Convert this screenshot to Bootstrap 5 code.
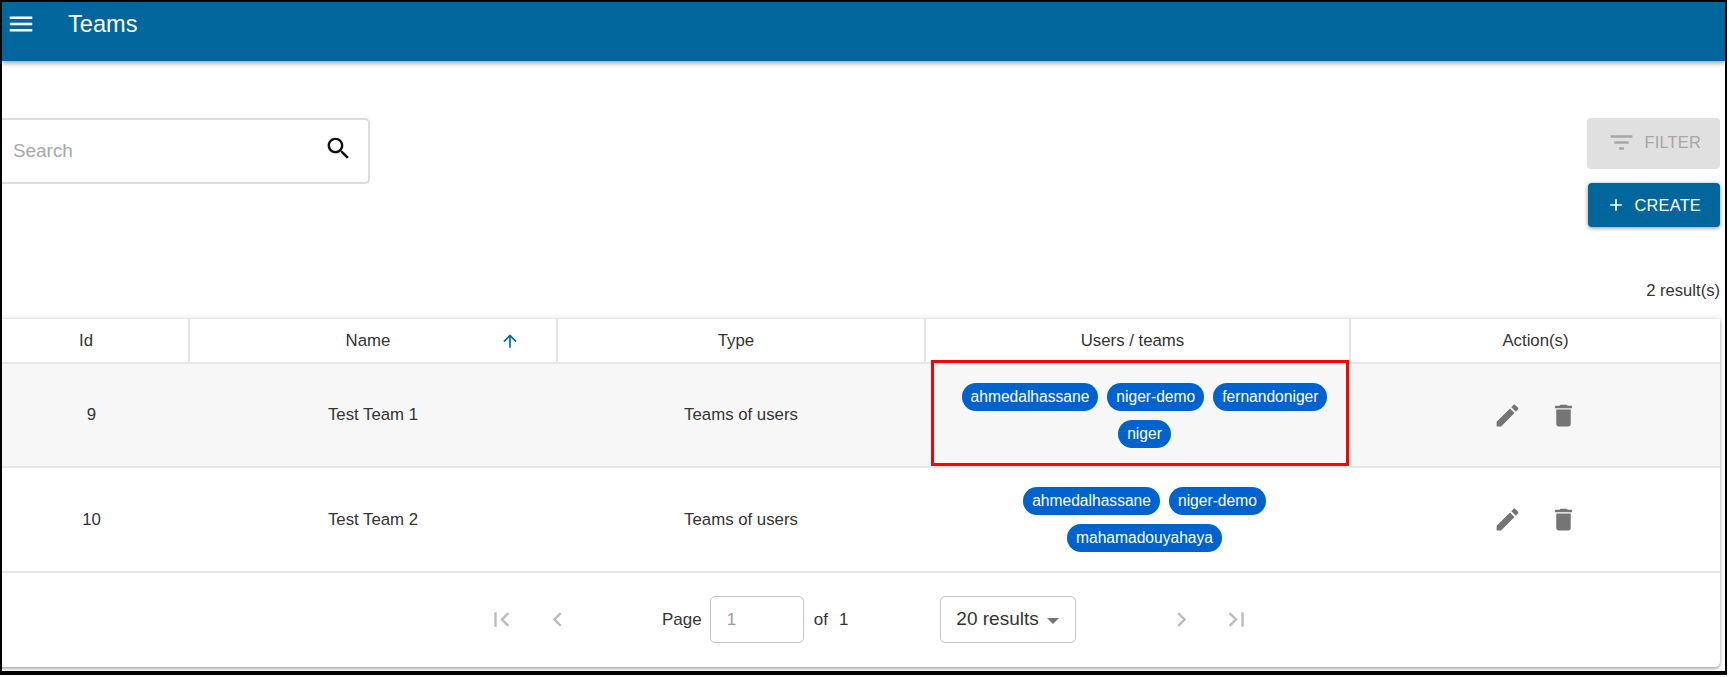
<!DOCTYPE html>
<html lang="en">
  <head>
    <meta charset="UTF-8" />
    <title>Teams</title>
    <link href="https://cdn.jsdelivr.net/npm/bootstrap@5.3.3/dist/css/bootstrap.min.css" rel="stylesheet" />
    <style>
      html, body { height: 100%; overflow: hidden; background: #fff; }
      body { font-family: "Liberation Sans", Arial, sans-serif; color: #333; font-size: 16.8px; }
      .screen-frame { position: relative; width: 1727px; height: 675px; border: 2px solid #000; border-bottom-width: 4px; overflow: hidden; }

      .app-bar { height: 59px; background: #00669b; box-shadow: 0 2px 5px rgba(0,0,0,.4); color: #fff; }
      .app-bar svg { width: 30px; height: 30px; fill: #fff; margin: 7px 0 0 4px; }
      .app-title { font-size: 23.6px; margin: 9px 0 0 32px; line-height: 26px; }

      .page-body { padding: 57px 5px 0 0; }
      .search-box { width: 380px; height: 66px; margin-left: -12px; padding: 0 15px 0 21px; border: 2px solid #dcdcdc; border-radius: 5px; }
      .search-box span { color: #a8a8a8; font-size: 18.9px; }
      .search-box svg { width: 29px; height: 29px; fill: #111; margin-top: -5px; }

      .tool-btn { display: flex; align-items: center; justify-content: flex-end; width: 132px; border: 0; border-radius: 4px; padding: 0 19px 0 0; font-size: 16.4px; letter-spacing: .2px; }
      .tool-filter { height: 51px; width: 133px; background: #e0e0e0; color: #a6a6a6; margin-bottom: 14px; padding-bottom: 3px; }
      .tool-filter svg { width: 29px; height: 29px; fill: #a6a6a6; margin-right: 9px; }
      .tool-create { height: 44px; background: #00669b; color: #fff; box-shadow: 0 1px 4px rgba(0,0,0,.45); }
      .tool-create svg { width: 20px; height: 20px; fill: #fff; margin-right: 9px; }
      .result-count { font-size: 16.6px; line-height: 20px; margin: 54px 0 18px; text-align: right; }

      .data-panel { margin-left: -8px; border-radius: 0 0 5px 5px; box-shadow: 0 0 5px rgba(0,0,0,.2), 0 2px 3px rgba(0,0,0,.25); background: #fff; }
      .team-table { table-layout: fixed; width: 1726px; margin: 0; --bs-table-color: #333; }
      .team-table th, .team-table td { text-align: center; vertical-align: middle; padding: 0; font-weight: 400; border-bottom: 2px solid #e6e6e6; }
      .team-table th { height: 44px; border-right: 2px solid #e4e4e4; padding-right: 10px; }
      .team-table th:last-child { border-right: 0; padding-right: 0; }
      .team-table td { height: 105px; }
      .row-shaded td { --bs-table-bg: #f7f7f7; background: #f7f7f7; height: 104px; }
      .sort-head { display: grid; grid-template-columns: 1fr auto 1fr; align-items: center; }
      .sort-head svg { width: 20px; height: 20px; fill: #00669b; justify-self: end; margin-right: 26px; }

      .chip-wrap { display: flex; flex-wrap: wrap; justify-content: center; gap: 9px; padding: 0 9px 0 23px; }
      .user-chip { background: #0062cc; color: #fff; height: 28px; line-height: 28px; padding: 0 9px; border-radius: 14px; font-size: 15.6px; }

      .row-actions { display: flex; justify-content: center; gap: 27px; }
      .row-actions svg { width: 29px; height: 29px; fill: #757575; }

      .pager { height: 94px; padding: 0 0 1px 493px; font-size: 17px; }
      .pager svg { width: 29px; height: 29px; fill: #bdbdbd; }
      .pager-prev { margin-left: 27px; }
      .pager-label { margin-left: 90px; }
      .pager-input { width: 94px; height: 47px; margin: 0 10px 0 8px; padding-left: 16px; border: 1px solid #c4c4c4; border-radius: 5px; color: #9a9a9a; display: flex; align-items: center; }
      .pager-total { margin-left: 11px; }
      .pager-size { width: 136px; height: 47px; margin-left: 92px; padding-left: 15px; border: 1px solid #c4c4c4; border-radius: 5px; display: flex; align-items: center; font-size: 19px; color: #333; }
      .pager-caret { width: 0; height: 0; margin-left: 8px; margin-top: 2px; border: 6px solid transparent; border-top: 6px solid #757575; border-bottom: 0; }
      .pager-next { margin-left: 91px; }
      .pager-last { margin-left: 26px; }

      .mark-box { position: absolute; left: 929px; top: 358px; width: 418px; height: 106px; border: 3px solid #f00; pointer-events: none; }
    </style>
  </head>
  <body>
    <div class="screen-frame">
      <!-- top bar -->
      <header class="app-bar d-flex align-items-start">
        <svg viewBox="0 0 24 24"><path d="M3 18h18v-2H3v2zm0-5h18v-2H3v2zm0-7v2h18V6H3z" /></svg>
        <div class="app-title">Teams</div>
      </header>

      <main class="page-body">
        <div class="d-flex justify-content-between align-items-start">
          <div class="search-box d-flex align-items-center justify-content-between">
            <span>Search</span>
            <svg viewBox="0 0 24 24"><path d="M15.5 14h-.79l-.28-.27C15.41 12.59 16 11.11 16 9.5 16 5.91 13.09 3 9.5 3S3 5.91 3 9.5 5.91 16 9.5 16c1.61 0 3.09-.59 4.23-1.57l.27.28v.79l5 4.99L20.49 19l-4.99-5zm-6 0C7.01 14 5 11.99 5 9.5S7.01 5 9.5 5 14 7.01 14 9.5 11.99 14 9.5 14z" /></svg>
          </div>
          <div class="d-flex flex-column align-items-end">
            <button type="button" class="tool-btn tool-filter">
              <svg viewBox="0 0 24 24"><path d="M10 18h4v-2h-4v2zM3 6v2h18V6H3zm3 7h12v-2H6v2z" /></svg>FILTER
            </button>
            <button type="button" class="tool-btn tool-create">
              <svg viewBox="0 0 24 24"><path d="M19 13h-6v6h-2v-6H5v-2h6V5h2v6h6v2z" /></svg>CREATE
            </button>
          </div>
        </div>

        <div class="result-count">2 result(s)</div>

        <div class="data-panel">
          <table class="table team-table">
            <colgroup>
              <col style="width: 195px" /><col style="width: 368px" /><col style="width: 368px" /><col style="width: 425px" /><col style="width: 370px" />
            </colgroup>
            <thead>
              <tr>
                <th>Id</th>
                <th>
                  <div class="sort-head">
                    <span></span><span>Name</span>
                    <svg viewBox="0 0 24 24"><path d="M4 12l1.41 1.41L11 7.83V20h2V7.83l5.58 5.59L20 12l-8-8-8 8z" /></svg>
                  </div>
                </th>
                <th>Type</th>
                <th>Users / teams</th>
                <th>Action(s)</th>
              </tr>
            </thead>
            <tbody>
              <tr class="row-shaded">
                <td>9</td>
                <td>Test Team 1</td>
                <td>Teams of users</td>
                <td>
                  <div class="chip-wrap">
                    <span class="user-chip">ahmedalhassane</span>
                    <span class="user-chip">niger-demo</span>
                    <span class="user-chip">fernandoniger</span>
                    <span class="user-chip">niger</span>
                  </div>
                </td>
                <td>
                  <div class="row-actions">
                    <svg viewBox="0 0 24 24"><path d="M3 17.25V21h3.75L17.81 9.94l-3.75-3.75L3 17.25zM20.71 7.04c.39-.39.39-1.02 0-1.41l-2.34-2.34c-.39-.39-1.02-.39-1.41 0l-1.83 1.83 3.75 3.75 1.83-1.83z" /></svg>
                    <svg viewBox="0 0 24 24"><path d="M6 19c0 1.1.9 2 2 2h8c1.1 0 2-.9 2-2V7H6v12zM19 4h-3.5l-1-1h-5l-1 1H5v2h14V4z" /></svg>
                  </div>
                </td>
              </tr>
              <tr>
                <td>10</td>
                <td>Test Team 2</td>
                <td>Teams of users</td>
                <td>
                  <div class="chip-wrap">
                    <span class="user-chip">ahmedalhassane</span>
                    <span class="user-chip">niger-demo</span>
                    <span class="user-chip">mahamadouyahaya</span>
                  </div>
                </td>
                <td>
                  <div class="row-actions">
                    <svg viewBox="0 0 24 24"><path d="M3 17.25V21h3.75L17.81 9.94l-3.75-3.75L3 17.25zM20.71 7.04c.39-.39.39-1.02 0-1.41l-2.34-2.34c-.39-.39-1.02-.39-1.41 0l-1.83 1.83 3.75 3.75 1.83-1.83z" /></svg>
                    <svg viewBox="0 0 24 24"><path d="M6 19c0 1.1.9 2 2 2h8c1.1 0 2-.9 2-2V7H6v12zM19 4h-3.5l-1-1h-5l-1 1H5v2h14V4z" /></svg>
                  </div>
                </td>
              </tr>
            </tbody>
          </table>

          <!-- pagination -->
          <div class="pager d-flex align-items-center">
            <svg viewBox="0 0 24 24"><path d="M18.41 16.59L13.82 12l4.59-4.59L17 6l-6 6 6 6zM6 6h2v12H6z" /></svg>
            <svg class="pager-prev" viewBox="0 0 24 24"><path d="M15.41 7.41L14 6l-6 6 6 6 1.41-1.41L10.83 12z" /></svg>
            <span class="pager-label">Page</span>
            <div class="pager-input">1</div>
            <span>of</span>
            <span class="pager-total">1</span>
            <div class="pager-size">20 results<span class="pager-caret"></span></div>
            <svg class="pager-next" viewBox="0 0 24 24"><path d="M10 6L8.59 7.41 13.17 12l-4.58 4.59L10 18l6-6z" /></svg>
            <svg class="pager-last" viewBox="0 0 24 24"><path d="M5.59 7.41L10.18 12l-4.59 4.59L7 18l6-6-6-6zM16 6h2v12h-2z" /></svg>
          </div>
        </div>
      </main>

      <div class="mark-box"></div>
    </div>
    <script src="https://cdn.jsdelivr.net/npm/bootstrap@5.3.3/dist/js/bootstrap.bundle.min.js"></script>
  </body>
</html>
